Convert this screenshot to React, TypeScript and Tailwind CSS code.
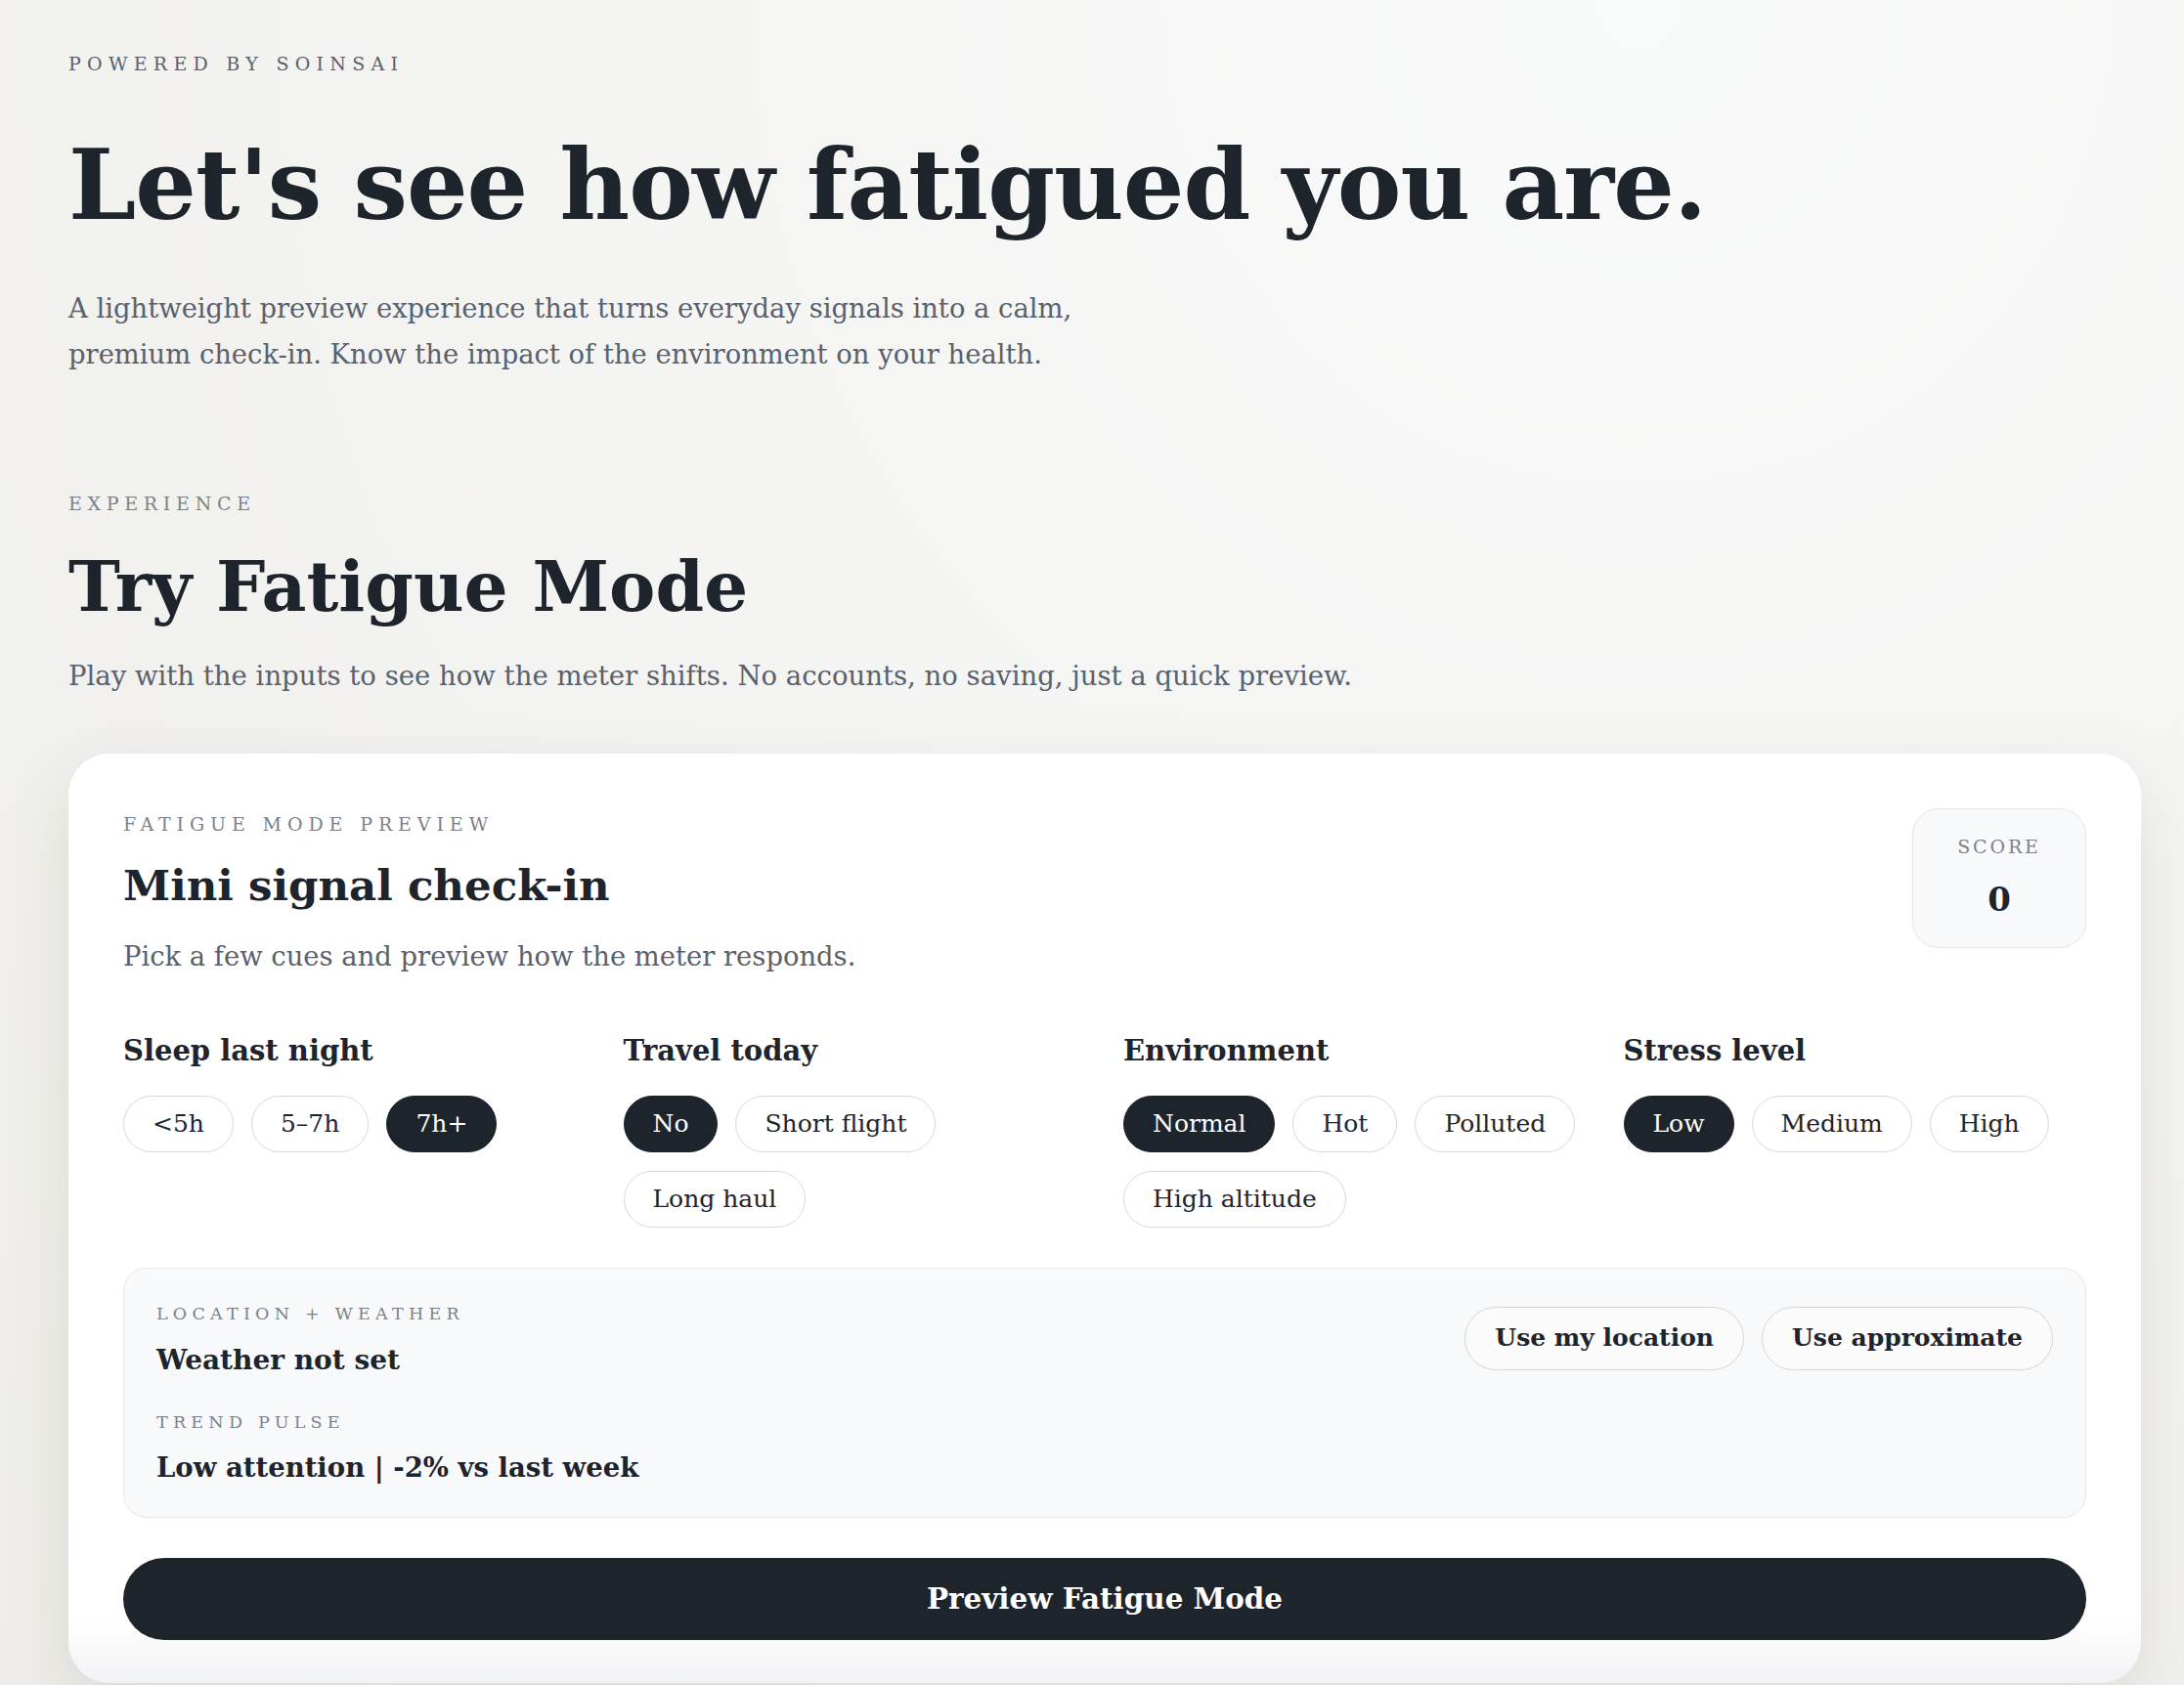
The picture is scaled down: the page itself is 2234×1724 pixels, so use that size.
import React from "react";

const Label = ({ children, className = "" }: { children: React.ReactNode; className?: string }) => (
  <div className={`leading-[32px] uppercase ${className}`}>{children}</div>
);

const Chip = ({ label, active = false }: { label: string; active?: boolean }) => (
  <div
    className={`h-[58px] px-[29px] rounded-full flex items-center text-[25px] border-[1.5px] ${
      active ? "bg-[#1e242c] border-[#1e242c] text-white" : "bg-white border-[#d6d8dc] text-[#1e242c]"
    }`}
  >
    {label}
  </div>
);

const groups: { title: string; options: string[]; active: string }[] = [
  { title: "Sleep last night", options: ["<5h", "5–7h", "7h+"], active: "7h+" },
  { title: "Travel today", options: ["No", "Short flight", "Long haul"], active: "No" },
  { title: "Environment", options: ["Normal", "Hot", "Polluted", "High altitude"], active: "Normal" },
  { title: "Stress level", options: ["Low", "Medium", "High"], active: "Low" },
];

export default function App() {
  return (
    <div className="min-h-screen w-full font-['DejaVu_Serif',serif] text-[#1e242c] bg-[radial-gradient(ellipse_at_75%_0%,#f9fafa_0%,#f4f4f2_45%,#eeede9_100%)] pl-[70px] pr-[44px] pt-[49px]">
      <Label className="text-[19px] tracking-[0.33em] text-[#59606b]">Powered by Soinsai</Label>
      <h1 className="mt-[54px] text-[98.5px] leading-[110px] font-bold tracking-[-0.01em]">Let's see how fatigued you are.</h1>
      <p className="mt-[47px] text-[27.4px] leading-[47px] text-[#59616d]">
        A lightweight preview experience that turns everyday signals into a calm,
        <br />
        premium check-in. Know the impact of the environment on your health.
      </p>

      <Label className="mt-[113px] text-[19px] tracking-[0.3em] text-[#7b818b]">Experience</Label>
      <h2 className="mt-[29px] text-[71px] leading-[80px] font-bold">Try Fatigue Mode</h2>
      <p className="mt-[31px] text-[27.5px] leading-[40px] text-[#59616d]">
        Play with the inputs to see how the meter shifts. No accounts, no saving, just a quick preview.
      </p>

      <div className="mt-[60px] w-[2120px] rounded-[42px] bg-linear-to-b from-white from-93% to-[#f1f2f4] shadow-[0_24px_70px_rgba(40,40,30,0.10)] px-[56px] pt-[56px] pb-[44px]">
        <div className="flex justify-between items-start">
          <div>
            <Label className="text-[19px] tracking-[0.31em] text-[#7b818b]">Fatigue mode preview</Label>
            <h3 className="mt-[19px] text-[43.5px] leading-[56px] font-bold">Mini signal check-in</h3>
            <p className="mt-[25px] text-[27.4px] leading-[40px] text-[#59616d]">Pick a few cues and preview how the meter responds.</p>
          </div>
          <div className="w-[178px] h-[143px] rounded-[27px] border-[1.5px] border-[#e6e5e2] bg-[#f8f9fa] flex flex-col items-center pt-[22px]">
            <div className="text-[19px] leading-[32px] tracking-[0.15em] uppercase text-[#7b818b]">Score</div>
            <div className="mt-[18px] text-[34px] leading-[40px] font-bold">0</div>
          </div>
        </div>

        <div className="mt-[58px] grid grid-cols-4 gap-x-[38px]">
          {groups.map((g) => (
            <div key={g.title}>
              <div className="text-[29px] leading-[36px] font-bold">{g.title}</div>
              <div className="mt-[28px] flex flex-wrap gap-x-[18px] gap-y-[19px]">
                {g.options.map((o) => (
                  <Chip key={o} label={o} active={o === g.active} />
                ))}
              </div>
            </div>
          ))}
        </div>

        <div className="mt-[41px] rounded-[24px] border-[1.5px] border-[#e7e6e3] bg-[#f8f9fa] pt-[30px] pb-[33px] px-[33px]">
          <div className="flex justify-between items-center">
            <div>
              <Label className="text-[17.5px] tracking-[0.3em] text-[#7b818b]">Location + weather</Label>
              <div className="mt-[14px] text-[28px] leading-[36px] font-bold">Weather not set</div>
            </div>
            <div className="flex gap-[18px]">
              <button className="h-[65px] px-[30px] rounded-full border-[1.5px] border-[#d3d5da] bg-[#fbfbfc] text-[25px] font-bold text-[#1e242c]">
                Use my location
              </button>
              <button className="h-[65px] px-[30px] rounded-full border-[1.5px] border-[#d3d5da] bg-[#fbfbfc] text-[25px] font-bold text-[#1e242c]">
                Use approximate
              </button>
            </div>
          </div>
          <Label className="mt-[29px] text-[17.5px] tracking-[0.3em] text-[#7b818b]">Trend pulse</Label>
          <div className="mt-[12px] text-[27.5px] leading-[36px] font-bold">Low attention | -2% vs last week</div>
        </div>

        <button className="mt-[41px] w-full h-[84px] rounded-full bg-[#1e242c] text-white text-[29.4px] font-bold">
          Preview Fatigue Mode
        </button>
      </div>
    </div>
  );
}
